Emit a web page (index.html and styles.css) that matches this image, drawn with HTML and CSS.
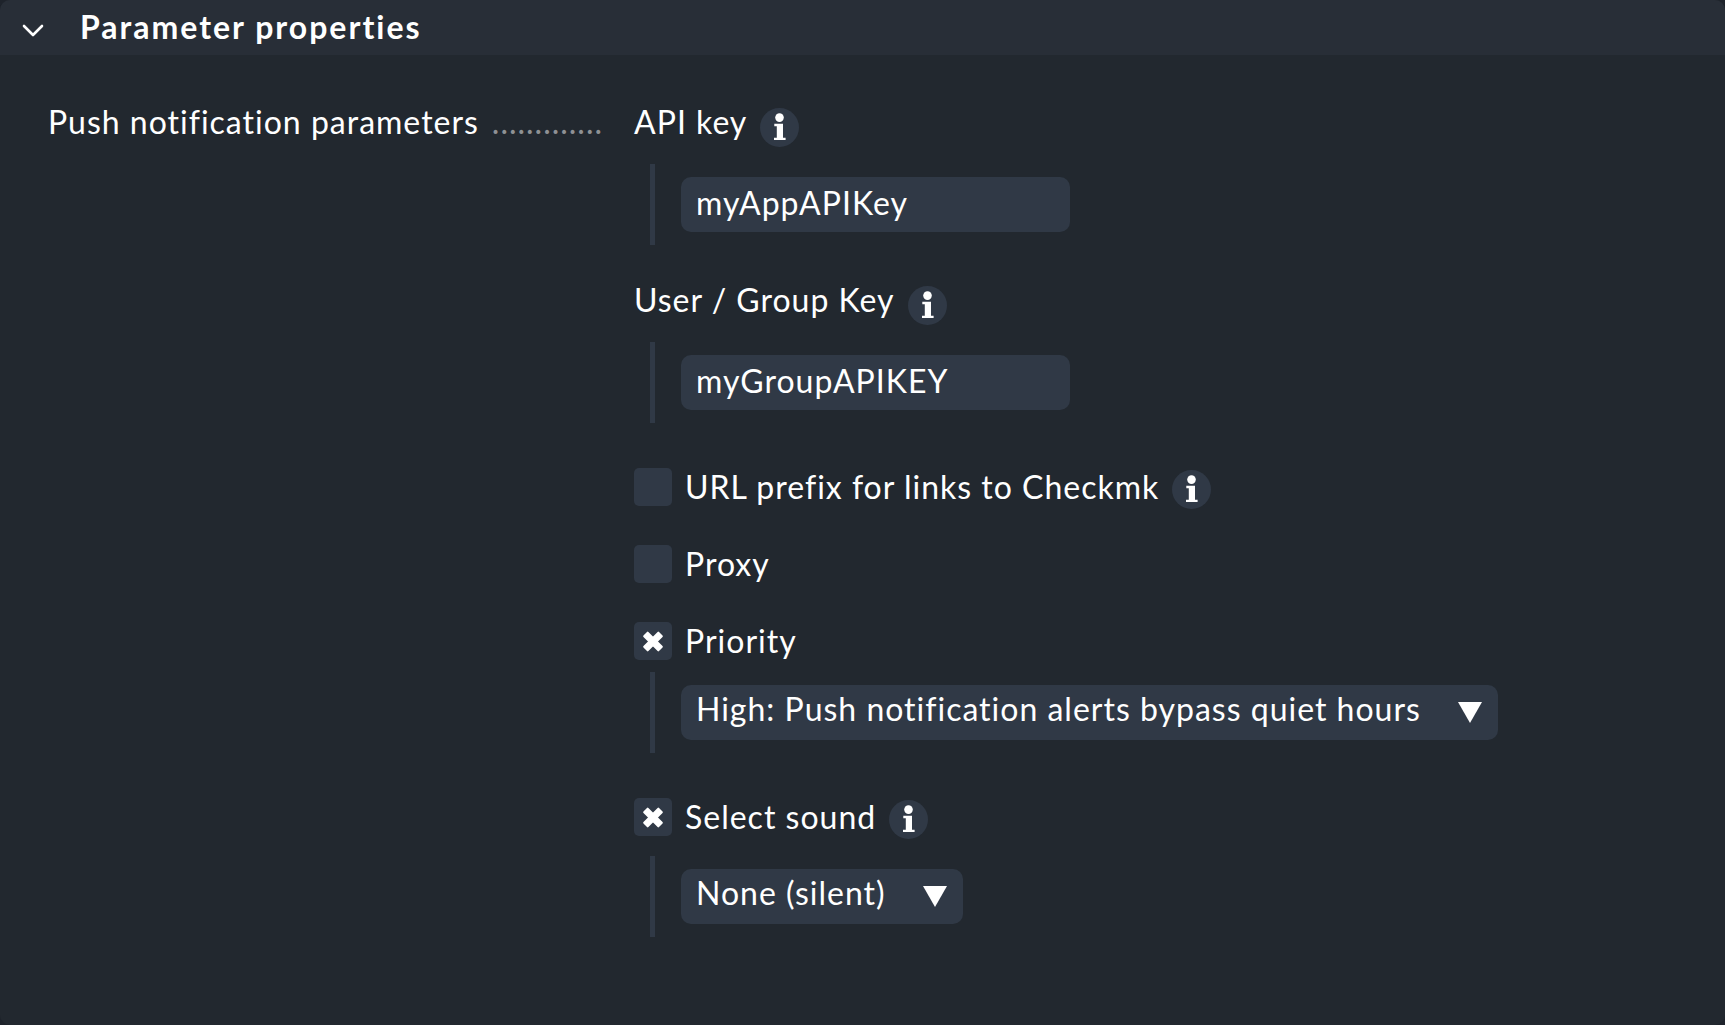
FILE: index.html
```html
<!DOCTYPE html>
<html lang="en">
<head>
  <meta charset="UTF-8" />
  <meta name="viewport" content="width=device-width, initial-scale=1.0" />
  <title>Parameter properties</title>
  <link rel="stylesheet" href="styles.css">
</head>
<body>
  <!-- shared icon shapes -->
  <svg class="sprite" aria-hidden="true">
    <symbol id="icon-info" viewBox="0 0 39 39">
      <circle cx="19.5" cy="19.5" r="19.5" fill="#303946" />
      <circle cx="19.5" cy="9.6" r="4.3" fill="#fff" />
      <path d="M14.3 15.8H23V29.8H25.6V32H14V29.8H16.8V18.2H14.3Z" fill="#fff" />
    </symbol>
    <symbol id="icon-arrow" viewBox="0 0 24 21">
      <path d="M0 0H24L12 21Z" fill="#fff" />
    </symbol>
  </svg>

  <main class="panel">
    <header class="panel-header">
      <button type="button" class="toggle" aria-label="Collapse section" aria-expanded="true">
        <svg width="22" height="14" viewBox="0 0 22 14"><path d="M2 2L11 11L20 2" fill="none" stroke="#fff" stroke-width="2.6" stroke-linecap="round" stroke-linejoin="round" /></svg>
      </button>
      <h1>Parameter properties</h1>
    </header>

    <form class="panel-body">
      <div class="legend">
        <span>Push notification parameters</span>
        <span class="dots" aria-hidden="true">.............</span>
      </div>

      <div class="fields">
        <section class="field">
          <div class="field-title">
            <label for="api-key">API key</label>
            <button type="button" class="info" aria-label="Help for API key"><svg><use href="#icon-info" /></svg></button>
          </div>
          <div class="indent">
            <input type="text" class="control" id="api-key" value="myAppAPIKey">
          </div>
        </section>

        <section class="field">
          <div class="field-title">
            <label for="group-key">User / Group Key</label>
            <button type="button" class="info" aria-label="Help for User / Group Key"><svg><use href="#icon-info" /></svg></button>
          </div>
          <div class="indent">
            <input type="text" class="control" id="group-key" value="myGroupAPIKEY">
          </div>
        </section>

        <section class="options">
          <div class="option">
            <input type="checkbox" id="url-prefix">
            <label for="url-prefix">URL prefix for links to Checkmk</label>
            <button type="button" class="info" aria-label="Help for URL prefix"><svg><use href="#icon-info" /></svg></button>
          </div>
          <div class="option">
            <input type="checkbox" id="proxy">
            <label for="proxy">Proxy</label>
          </div>
          <div class="option-group">
            <div class="option">
              <input type="checkbox" id="priority" checked>
              <label for="priority">Priority</label>
            </div>
            <div class="indent indent-close">
              <div class="dropdown">
                <select class="control" aria-label="Priority level">
                  <option>High: Push notification alerts bypass quiet hours</option>
                </select>
                <svg class="arrow"><use href="#icon-arrow" /></svg>
              </div>
            </div>
          </div>
        </section>

        <section class="option-group">
          <div class="option">
            <input type="checkbox" id="sound" checked>
            <label for="sound">Select sound</label>
            <button type="button" class="info" aria-label="Help for Select sound"><svg><use href="#icon-info" /></svg></button>
          </div>
          <div class="indent">
            <div class="dropdown">
              <select class="control" aria-label="Sound">
                <option>None (silent)</option>
              </select>
              <svg class="arrow"><use href="#icon-arrow" /></svg>
            </div>
          </div>
        </section>
      </div>
    </form>
  </main>
</body>
</html>
```

FILE: styles.css
```css
* {
  box-sizing: border-box;
}
body {
  margin: 0;
  background: #1e232b;
  color: #fff;
  font-family: Lato, sans-serif;
  font-size: 32px;
  line-height: 38px;
  letter-spacing: 1px;
}
button {
  padding: 0;
  border: none;
  background: none;
  cursor: pointer;
}
button svg {
  display: block;
}
.sprite {
  display: none;
}
.panel {
  min-height: 100vh;
  background: #22282f;
  border-radius: 10px;
  overflow: hidden;
}
.panel-header {
  display: flex;
  align-items: center;
  gap: 36px;
  height: 55px;
  padding: 0 22px;
  background: #282e37;
}
.toggle {
  padding-top: 6px;
}
h1 {
  margin: 0 0 2px;
  font-size: 32px;
  font-weight: bold;
  letter-spacing: 2px;
}
.panel-body {
  display: grid;
  grid-template-columns: 554px 1fr;
  column-gap: 32px;
  padding: 48px;
}
.legend {
  display: flex;
  gap: 13px;
  white-space: nowrap;
}
.dots {
  color: #8f9194;
}
.fields {
  display: flex;
  flex-direction: column;
}
.field {
  margin-bottom: 36px;
}
.field:nth-of-type(2) {
  margin-bottom: 45px;
}
.field-title {
  display: flex;
  align-items: flex-end;
  gap: 13px;
  height: 44px;
}
.field-title label {
  align-self: flex-start;
}
.info svg {
  width: 39px;
  height: 39px;
}
.indent {
  width: fit-content;
  margin: 17px 0 0 16px;
  padding: 13px 0 13px 26px;
  border-left: 5px solid #303946;
}
.indent-close {
  margin-top: 9px;
}
.control {
  display: block;
  height: 55px;
  padding: 6px 15px 11px;
  border: none;
  border-radius: 10px;
  background: #303946;
  color: #fff;
  font: inherit;
  letter-spacing: inherit;
}
input.control {
  width: 389px;
}
select.control {
  appearance: none;
  padding: 5px 77px 12px 15px;
}
.dropdown {
  position: relative;
}
.arrow {
  position: absolute;
  top: 17px;
  right: 16px;
  width: 24px;
  height: 21px;
  pointer-events: none;
}
.options {
  display: flex;
  flex-direction: column;
  gap: 36px;
  margin-bottom: 45px;
}
.option {
  display: flex;
  align-items: flex-start;
  height: 41px;
}
.option .info {
  align-self: flex-end;
  margin-left: 13px;
}
input[type="checkbox"] {
  appearance: none;
  display: grid;
  place-items: center;
  width: 38px;
  height: 38px;
  margin: 0 13px 0 0;
  border-radius: 5px;
  background: #303946;
}
/* the two bars of the cross */
input[type="checkbox"]:checked::before,
input[type="checkbox"]:checked::after {
  content: '';
  grid-area: 1 / 1;
  width: 22px;
  height: 7px;
  border-radius: 1px;
  background: #fff;
  transform: rotate(45deg);
}
input[type="checkbox"]:checked::after {
  transform: rotate(-45deg);
}
```
